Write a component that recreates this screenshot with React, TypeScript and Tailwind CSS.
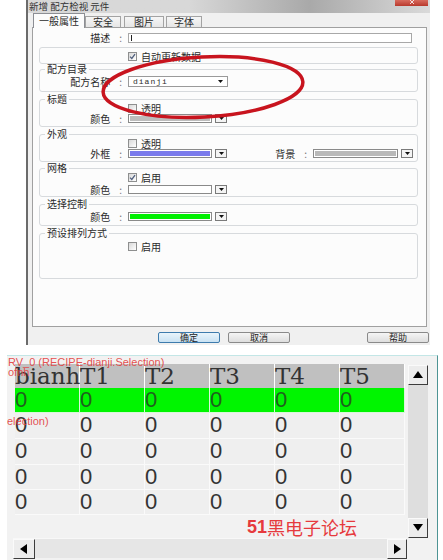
import React from 'react';

const Check = ({ checked }: { checked?: boolean }) => (
  <span className="w-[9px] h-[9px] border border-[#8e8f8f] bg-linear-to-br from-[#d8d8d8] to-white flex items-center justify-center">
    {checked && (
      <svg width="7" height="7" viewBox="0 0 7 7">
        <path d="M1 3.6 L2.8 5.4 L6 1.2" stroke="#51607e" strokeWidth="1.3" fill="none" />
      </svg>
    )}
  </span>
);

const CheckRow = ({ label, checked, cls }: { label: string; checked?: boolean; cls: string }) => (
  <div className={`flex items-center gap-[4px] ml-[88px] h-[9px] ${cls}`}>
    <Check checked={checked} />
    <span className="text-[10px] leading-[10px]">{label}</span>
  </div>
);

const DropBtn = () => (
  <span className="w-[12px] h-[9px] border border-[#7a7a7a] bg-[#f4f4f4] flex items-center justify-center">
    <svg width="5" height="3" viewBox="0 0 5 3">
      <path d="M0 0 H5 L2.5 3 Z" fill="#111" />
    </svg>
  </span>
);

const Swatch = ({ color, w = 'w-[84px]' }: { color: string; w?: string }) => (
  <div className="flex items-center gap-[3px]">
    <span className={`${w} h-[9px] border border-[#8a8a8a] p-[1px] bg-white`}>
      <span className={`block w-full h-full ${color}`} />
    </span>
    <DropBtn />
  </div>
);

const Label = ({ text, w = 'w-[88px]' }: { text: string; w?: string }) => (
  <span className={`${w} shrink-0 flex justify-end pr-[6px] text-[10px] leading-[10px]`}>
    <span>{text}</span>
    <span className="ml-[9px] text-[#777]">:</span>
  </span>
);

const Group = ({ title, cls, children }: { title: string; cls: string; children?: React.ReactNode }) => (
  <fieldset className={`border border-[#d7dadd] rounded-[3px] ${cls}`}>
    <legend className="ml-[5px] px-[2px] text-[10px] leading-[10px]">{title}</legend>
    {children}
  </fieldset>
);

const Btn = ({ text, cls }: { text: string; cls: string }) => (
  <div className={`w-[62px] h-[11px] border rounded-[2px] flex items-center justify-center text-[9px] leading-[9px] ${cls}`}>
    {text}
  </div>
);

const Arrow = ({ dir }: { dir: 'up' | 'down' | 'left' | 'right' }) => {
  const d = {
    up: 'M1 9 L6 2 L11 9 Z',
    down: 'M1 2 L11 2 L6 9 Z',
    left: 'M9 1 L9 11 L2 6 Z',
    right: 'M3 1 L3 11 L10 6 Z',
  }[dir];
  return (
    <svg width="12" height="12" viewBox="0 0 12 12">
      <path d={d} fill="#000" />
    </svg>
  );
};

const ScrollBtn = ({ dir, w }: { dir: 'up' | 'down' | 'left' | 'right'; w: string }) => (
  <div className={`${w} h-[20px] shrink-0 bg-[#ececec] border border-t-[#fafafa] border-l-[#fafafa] border-b-[#3c3c3c] border-r-[#3c3c3c] flex items-center justify-center`}>
    <Arrow dir={dir} />
  </div>
);

const cols = ['bianh', 'T1', 'T2', 'T3', 'T4', 'T5'];
const rowH = ['h-[25px]', 'h-[26px]', 'h-[26px]', 'h-[25px]', 'h-[25px]'];

export default function App() {
  return (
    <div className="relative w-[443px] h-[560px] overflow-hidden bg-white text-[#2b2b2b] font-['Noto_Sans_CJK_SC',sans-serif]">
      {/* dialog */}
      <div className="ml-[26px] w-[404px] h-[345px] border-l-2 border-[#6b6b6b] bg-[#f0f0f0] flex flex-col">
        <div className="h-[13px] shrink-0 flex items-start bg-linear-to-r from-[#d8d8d8] from-40% via-[#a9a9a9] via-70% to-[#dadada]">
          <span className="pl-[1px] pt-[1px] text-[9.5px] leading-[11px] text-[#333]">新增 配方检视 元件</span>
          <div className="ml-auto mr-[2px] w-[33px] h-[6px] bg-linear-to-b from-[#d86b5e] to-[#b8382c] flex items-start justify-center">
            <svg width="6" height="4" viewBox="0 0 6 4">
              <path d="M1 0 L5 4 M5 0 L1 4" stroke="#f4dede" strokeWidth="1" />
            </svg>
          </div>
        </div>

        {/* tabs */}
        <div className="h-[14px] shrink-0 pl-[5px] flex items-end text-[10px] leading-[10px]">
          <div className="relative z-10 w-[52px] h-[15px] -mb-px bg-[#fcfcfc] border border-b-0 border-[#8c8e94] flex items-center justify-center">一般属性</div>
          <div className="w-[36px] h-[11px] bg-linear-to-b from-[#f6f6f6] to-[#e6e6e6] border border-b-0 border-[#a3a3a3] flex items-center justify-center">安全</div>
          <div className="ml-[3px] w-[40px] h-[11px] bg-linear-to-b from-[#f6f6f6] to-[#e6e6e6] border border-b-0 border-[#a3a3a3] flex items-center justify-center">图片</div>
          <div className="ml-[2px] w-[36px] h-[11px] bg-linear-to-b from-[#f6f6f6] to-[#e6e6e6] border border-b-0 border-[#a3a3a3] flex items-center justify-center">字体</div>
        </div>

        <div className="ml-[4px] w-[395px] h-[300px] shrink-0 border border-[#a0a0a0] bg-[#fcfcfc] flex flex-col pl-[6px] pr-[8px]">
          <div className="mt-[5px] h-[10px] flex items-center -ml-[6px]">
            <Label text="描述" w="w-[95px]" />
            <div className="w-[284px] h-[10px] border border-[#a8a8a8] bg-white flex items-center pl-[2px]">
              <span className="w-px h-[6px] bg-[#222]" />
            </div>
          </div>

          <div className="mt-[4px] h-[17px] border border-[#d7dadd] rounded-[3px] pt-[4px]">
            <CheckRow label="自动更新数据" checked cls="" />
          </div>

          <Group title="配方目录" cls="h-[28px]">
            <div className="mt-[2px] h-[11px] flex items-center">
              <Label text="配方名称" />
              <div className="w-[100px] h-[11px] border border-[#9a9a9a] bg-white flex items-center pl-[4px] pr-[4px]">
                <span className="font-['Liberation_Mono',monospace] text-[8px] leading-[8px] tracking-[1px]">dianji</span>
                <svg className="ml-auto" width="5" height="3" viewBox="0 0 5 3">
                  <path d="M0 0 H5 L2.5 3 Z" fill="#111" />
                </svg>
              </div>
            </div>
          </Group>

          <Group title="标题" cls="mt-[2px] h-[33px]">
            <CheckRow label="透明" cls="" />
            <div className="mt-[1px] h-[9px] flex items-center">
              <Label text="颜色" />
              <Swatch color="bg-[#bdbdbd]" />
            </div>
          </Group>

          <Group title="外观" cls="mt-[2px] h-[33px]">
            <CheckRow label="透明" cls="" />
            <div className="mt-[1px] h-[9px] flex items-center">
              <Label text="外框" />
              <Swatch color="bg-[#7b7bec]" />
              <Label text="背景" w="w-[86px]" />
              <Swatch color="bg-[#b9b9b9]" w="w-[85px]" />
            </div>
          </Group>

          <Group title="网格" cls="mt-[1px] h-[34px]">
            <CheckRow label="启用" checked cls="" />
            <div className="mt-[3px] h-[9px] flex items-center">
              <Label text="颜色" />
              <Swatch color="bg-white" />
            </div>
          </Group>

          <Group title="选择控制" cls="mt-[2px] h-[27px]">
            <div className="mt-[3px] h-[9px] flex items-center">
              <Label text="颜色" />
              <Swatch color="bg-[#00f000]" />
            </div>
          </Group>

          <Group title="预设排列方式" cls="mt-[2px] h-[51px]">
            <CheckRow label="启用" cls="mt-[4px]" />
          </Group>
        </div>

        <div className="mt-[5px] flex items-center text-[#222]">
          <Btn text="确定" cls="ml-[130px] border-[#3d7bad] bg-linear-to-b from-[#e9f4fb] to-[#c9e2f3]" />
          <Btn text="取消" cls="ml-[8px] border-[#8a8a8a] bg-linear-to-b from-[#f5f5f5] to-[#dedede]" />
          <Btn text="帮助" cls="ml-[77px] border-[#8a8a8a] bg-linear-to-b from-[#f5f5f5] to-[#dedede]" />
        </div>
      </div>

      {/* recipe view */}
      <div className="relative mt-[10px] ml-[7px] w-[431px] h-[205px] border-t border-t-[#c3e6e6] border-r border-r-[#4e9494] bg-[#f2f2f2] pl-[8px] pt-[8px] flex">
        <div className="w-[392px] flex flex-col">
          <div className="flex h-[24px]">
            {cols.map((c) => (
              <div key={c} className="w-[65px] shrink-0 bg-[#c0c0c0] border-r border-white whitespace-nowrap font-['DejaVu_Serif',serif] text-[23px] leading-[24px] text-[#333]">
                {c}
              </div>
            ))}
          </div>
          {rowH.map((h, r) => (
            <div key={r} className={`flex ${h}`}>
              {cols.map((c) => (
                <div
                  key={c}
                  className={`w-[65px] shrink-0 border-r border-b font-['Liberation_Sans',sans-serif] text-[22px] leading-[24px] ${
                    r === 0 ? 'bg-[#00f500] border-[#d8f8d8] text-[#1f5f1f]' : 'bg-[#efefef] border-[#fafafa] text-[#333]'
                  }`}
                >
                  0
                </div>
              ))}
            </div>
          ))}
          <div className="h-[23px] pl-[232px] flex items-center text-[18px] leading-[18px] text-[#e63a3e]">
            <span className="font-bold font-['Liberation_Sans',sans-serif]">51</span>
            <span>黑电子论坛</span>
          </div>
          <div className="-ml-[2px] w-[394px] h-[20px] flex bg-[#e6e6e6] border-t border-[#f8f8f8]">
            <ScrollBtn dir="left" w="w-[22px]" />
            <div className="flex-1" />
            <ScrollBtn dir="right" w="w-[20px]" />
          </div>
        </div>

        <div className="ml-[1px] mt-[1px] w-[20px] h-[173px] flex flex-col">
          <ScrollBtn dir="up" w="w-[20px]" />
          <div className="flex-1 bg-[#dedede]" />
          <ScrollBtn dir="down" w="w-[20px]" />
        </div>

        <div className="absolute left-[1px] top-[1px] font-['Liberation_Sans',sans-serif] text-[11px] leading-[10px] text-[#e23c3c]/90">
          RV_0 (RECIPE-dianji.Selection)
          <br />
          ofnh
        </div>
        <div className="absolute left-0 top-[60px] font-['Liberation_Sans',sans-serif] text-[11px] leading-[10px] text-[#e23c3c]/90">
          election)
        </div>
      </div>

      {/* red marker ellipse */}
      <svg className="absolute left-0 top-0 pointer-events-none" width="443" height="560">
        <ellipse cx="203" cy="87" rx="100" ry="30" transform="rotate(-3 203 87)" stroke="#c8141e" strokeWidth="3.5" fill="none" />
      </svg>
    </div>
  );
}
